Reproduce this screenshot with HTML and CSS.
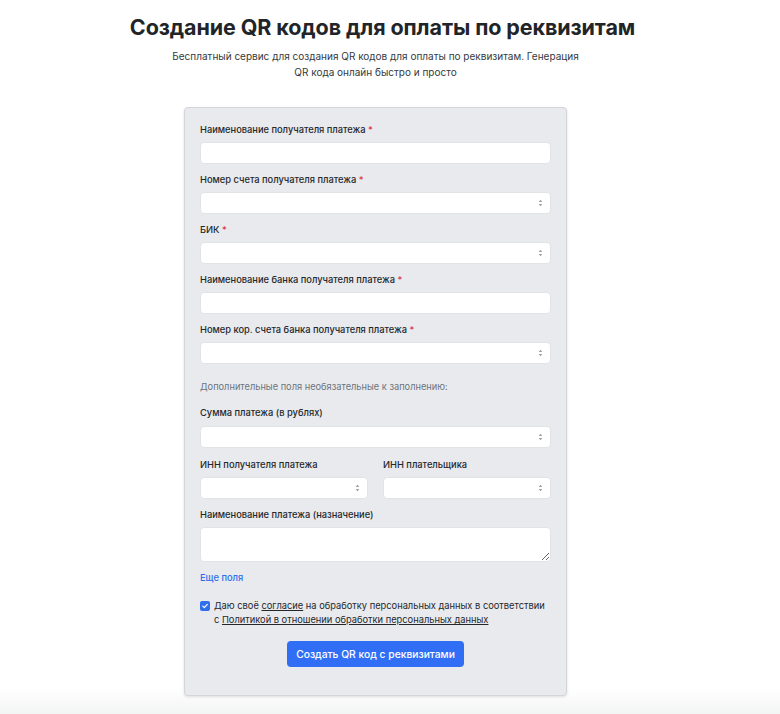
FILE: index.html
```html
<!DOCTYPE html>
<html lang="ru">
<head>
<meta charset="utf-8">
<title>Создание QR кодов для оплаты по реквизитам</title>
<link rel="stylesheet" href="styles.css">
</head>
<body>
<main class="page">
  <h1 class="title">Создание QR кодов для оплаты по реквизитам</h1>
  <p class="lead">Бесплатный сервис для создания QR кодов для оплаты по реквизитам. Генерация QR кода онлайн быстро и просто</p>

  <form class="card">
    <div class="group">
      <label class="label">Наименование получателя платежа <span class="req">*</span></label>
      <div class="box"><input class="input" type="text"></div>
    </div>
    <div class="group">
      <label class="label">Номер счета получателя платежа <span class="req">*</span></label>
      <div class="box"><input class="input" type="text"><span class="spin"><svg viewBox="0 0 6 10" width="5" height="8"><path d="M3 1 L5.2 3.8 H0.8 Z M3 9 L5.2 6.2 H0.8 Z" fill="#9a9ca2"/></svg></span></div>
    </div>
    <div class="group">
      <label class="label">БИК <span class="req">*</span></label>
      <div class="box"><input class="input" type="text"><span class="spin"><svg viewBox="0 0 6 10" width="5" height="8"><path d="M3 1 L5.2 3.8 H0.8 Z M3 9 L5.2 6.2 H0.8 Z" fill="#9a9ca2"/></svg></span></div>
    </div>
    <div class="group">
      <label class="label">Наименование банка получателя платежа <span class="req">*</span></label>
      <div class="box"><input class="input" type="text"></div>
    </div>
    <div class="group">
      <label class="label">Номер кор. счета банка получателя платежа <span class="req">*</span></label>
      <div class="box"><input class="input" type="text"><span class="spin"><svg viewBox="0 0 6 10" width="5" height="8"><path d="M3 1 L5.2 3.8 H0.8 Z M3 9 L5.2 6.2 H0.8 Z" fill="#9a9ca2"/></svg></span></div>
    </div>

    <p class="muted">Дополнительные поля необязательные к заполнению:</p>

    <div class="group group-sum">
      <label class="label">Сумма платежа (в рублях)</label>
      <div class="box"><input class="input" type="text"><span class="spin"><svg viewBox="0 0 6 10" width="5" height="8"><path d="M3 1 L5.2 3.8 H0.8 Z M3 9 L5.2 6.2 H0.8 Z" fill="#9a9ca2"/></svg></span></div>
    </div>
    <div class="row">
      <div class="group">
        <label class="label">ИНН получателя платежа</label>
        <div class="box"><input class="input" type="text"><span class="spin"><svg viewBox="0 0 6 10" width="5" height="8"><path d="M3 1 L5.2 3.8 H0.8 Z M3 9 L5.2 6.2 H0.8 Z" fill="#9a9ca2"/></svg></span></div>
      </div>
      <div class="group">
        <label class="label">ИНН плательщика</label>
        <div class="box"><input class="input" type="text"><span class="spin"><svg viewBox="0 0 6 10" width="5" height="8"><path d="M3 1 L5.2 3.8 H0.8 Z M3 9 L5.2 6.2 H0.8 Z" fill="#9a9ca2"/></svg></span></div>
      </div>
    </div>
    <div class="group group-last">
      <label class="label">Наименование платежа (назначение)</label>
      <textarea class="textarea"></textarea>
    </div>

    <a class="more" href="#">Еще поля</a>

    <div class="consent">
      <span class="check"><svg viewBox="0 0 10 10" width="8" height="8"><path d="M2.2 5.2 L4.2 7.1 L7.9 3" fill="none" stroke="#fff" stroke-width="1.5" stroke-linecap="round" stroke-linejoin="round"/></svg></span>
      <p class="consent-text">Даю своё <a href="#">согласие</a> на обработку персональных данных в соответствии с <a href="#">Политикой в отношении обработки персональных данных</a></p>
    </div>

    <div class="actions">
      <button class="btn" type="button">Создать QR код с реквизитами</button>
    </div>
  </form>
</main>
</body>
</html>
```

FILE: styles.css
```css
* { box-sizing: border-box; }

html, body { margin: 0; padding: 0; }

body {
  min-height: 100vh;
  font-family: Inter, "Noto Sans", "Liberation Sans", sans-serif;
  color: #212529;
  background: linear-gradient(to bottom, #ffffff calc(100% - 26px), #f3f4f4 100%);
}

.page {
  display: flex;
  flex-direction: column;
  align-items: center;
  padding: 12px 29px 0 0;
}

.title {
  margin: 0 0 0 14px;
  font-size: 21.5px;
  font-weight: 700;
  line-height: 30px;
  color: #212529;
  letter-spacing: -0.1px;
  white-space: nowrap;
}

.lead {
  margin: 6px 0 0;
  width: 420px;
  text-align: center;
  font-size: 10px;
  line-height: 16px;
  color: #343a40;
}

.card {
  margin-top: 27px;
  width: 383px;
  padding: 16px 15px 28px;
  background: #e9eaee;
  border: 1px solid #d3d5d9;
  border-radius: 4px;
  box-shadow: 0 1px 3px rgba(0, 0, 0, 0.12);
  display: flex;
  flex-direction: column;
}

.group {
  display: flex;
  flex-direction: column;
  min-width: 0;
  margin-bottom: 10px;
}

.label {
  font-size: 9.3px;
  font-weight: 500;
  line-height: 12px;
  color: #25282b;
  margin-bottom: 6px;
  white-space: nowrap;
}

.req { color: #dc3545; }

.box {
  display: flex;
  align-items: center;
  height: 22px;
  background: #fff;
  border: 1px solid #e1e3e6;
  border-radius: 4px;
}

.input {
  flex: 1;
  width: 0;
  min-width: 0;
  height: 100%;
  border: 0;
  background: transparent;
  padding: 0 8px;
  font: inherit;
  font-size: 10px;
  outline: none;
}

.spin {
  display: flex;
  width: 20px;
  justify-content: center;
  align-items: center;
}

.muted {
  margin: 7px 0 14px;
  font-size: 9.25px;
  line-height: 12px;
  color: #6c757d;
}

.group-sum { margin-bottom: 11px; }
.group-sum .label { margin-bottom: 7px; }

.row {
  display: grid;
  grid-template-columns: minmax(0, 1fr) minmax(0, 1fr);
  column-gap: 15px;
}

.textarea {
  display: block;
  width: 100%;
  height: 35px;
  background: #fff;
  border: 1px solid #e1e3e6;
  border-radius: 4px;
  font: inherit;
  outline: none;
}

.group-last { margin-bottom: 10px; }

.more {
  font-size: 9.3px;
  font-weight: 500;
  line-height: 12px;
  color: #2f6fec;
  text-decoration: none;
  align-self: flex-start;
}

.consent {
  display: flex;
  gap: 4px;
  margin-top: 15px;
}

.check {
  flex: none;
  width: 10px;
  height: 10px;
  margin-top: 2px;
  border-radius: 2px;
  background: #2f6fec;
  display: flex;
  align-items: center;
  justify-content: center;
}

.consent-text {
  margin: 0;
  font-size: 9.3px;
  line-height: 14px;
  color: #25282b;
}

.consent-text a {
  color: #25282b;
  text-decoration: underline;
}

.actions {
  display: flex;
  justify-content: center;
  margin-top: 14px;
}

.btn {
  width: 177px;
  height: 26px;
  border: 0;
  border-radius: 4px;
  background: #306ff5;
  color: #fff;
  font: inherit;
  font-size: 10.3px;
  font-weight: 500;
  white-space: nowrap;
  cursor: pointer;
}
```
